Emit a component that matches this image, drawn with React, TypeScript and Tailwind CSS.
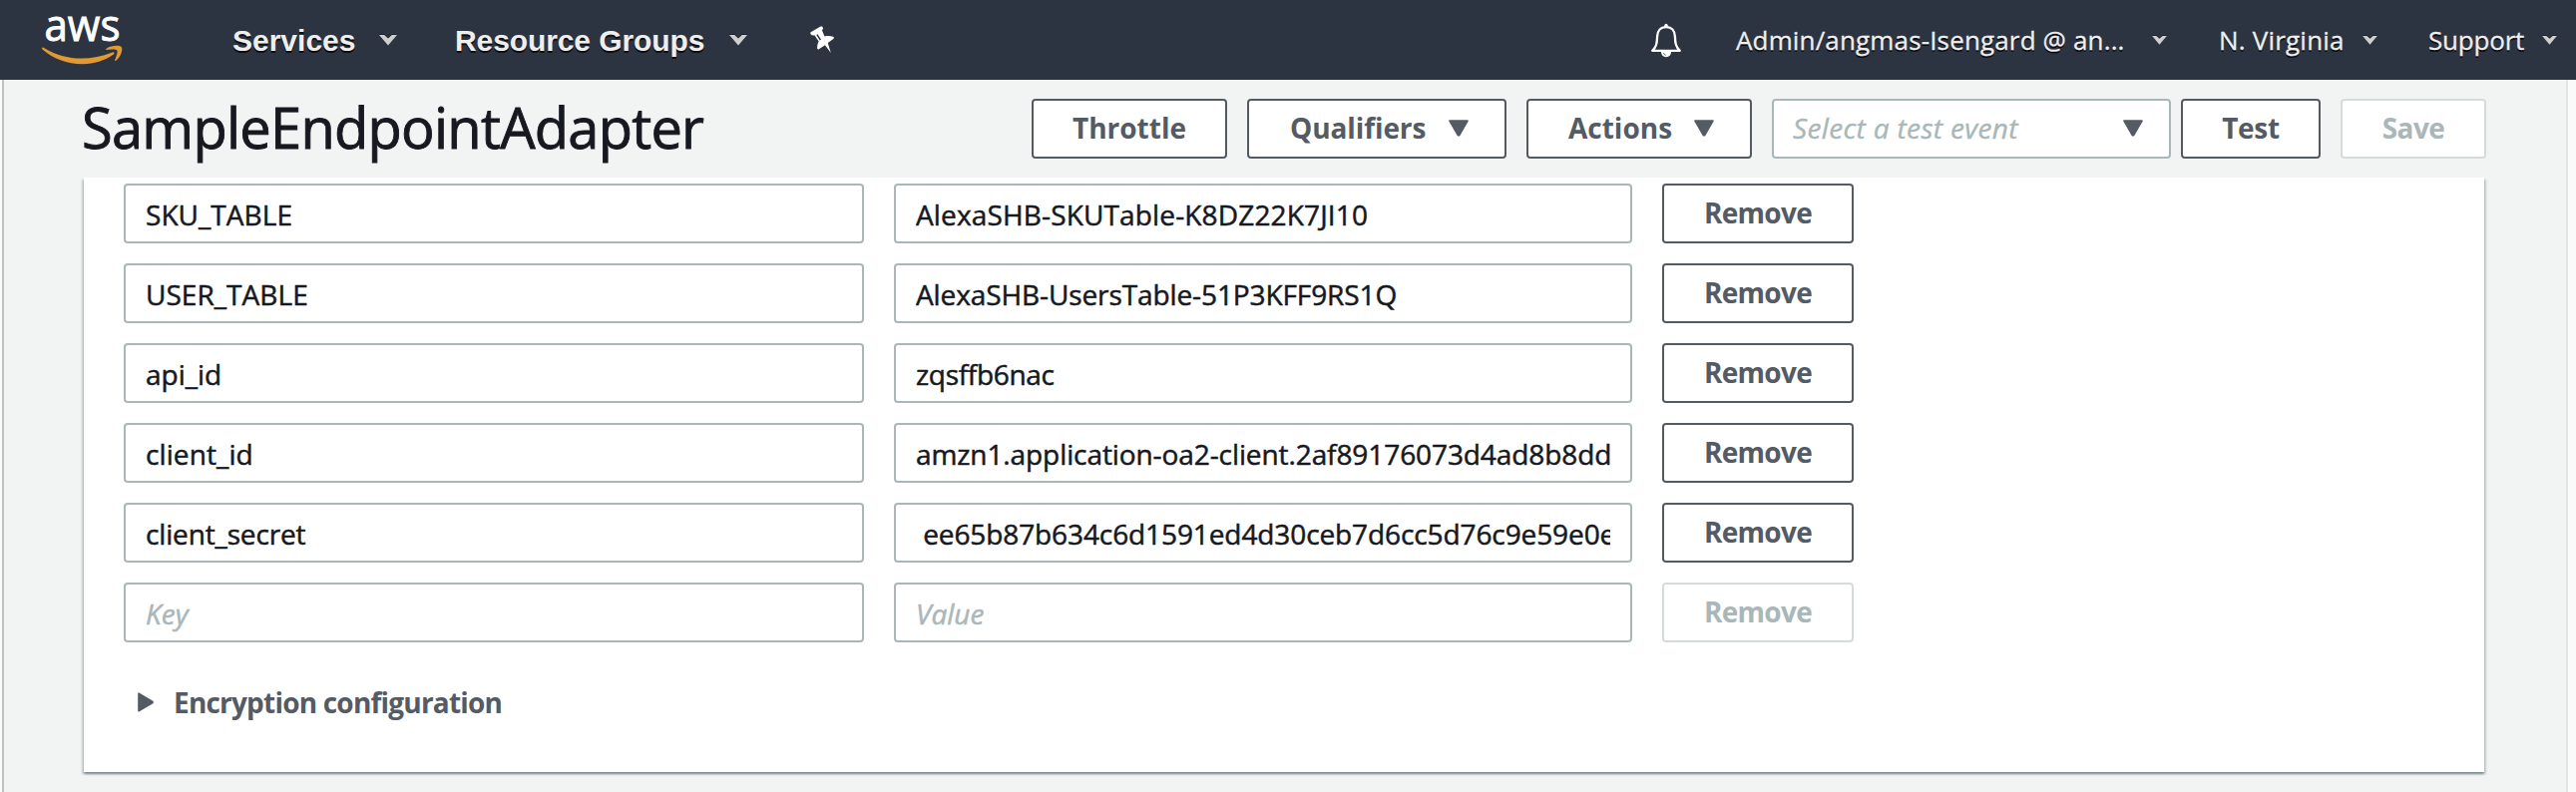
import React from "react";

type Field = { name: string; value: string; nameTracking: string; valueTracking: string };

const fields: Field[] = [
  { name: "SKU_TABLE", value: "AlexaSHB-SKUTable-K8DZ22K7JI10", nameTracking: "tracking-[0.05px]", valueTracking: "tracking-[0.15px]" },
  { name: "USER_TABLE", value: "AlexaSHB-UsersTable-51P3KFF9RS1Q", nameTracking: "tracking-[0.05px]", valueTracking: "tracking-[-0.1px]" },
  { name: "api_id", value: "zqsffb6nac", nameTracking: "", valueTracking: "tracking-[-0.3px]" },
  { name: "client_id", value: "amzn1.application-oa2-client.2af89176073d4ad8b8dd", nameTracking: "tracking-[0.1px]", valueTracking: "tracking-[-0.09px]" },
  { name: "client_secret", value: " ee65b87b634c6d1591ed4d30ceb7d6cc5d76c9e59e0e", nameTracking: "tracking-[-0.15px]", valueTracking: "tracking-[-0.1px]" },
  { name: "", value: "", nameTracking: "", valueTracking: "" },
];

const inputClass =
  "h-[60px] rounded-[4px] border-2 border-[#aab7b8] bg-white px-5 pt-[2px] text-[28px] text-[#16191f] outline-none [-webkit-text-stroke:0.5px] placeholder:italic placeholder:text-[#aab7b8]";

const buttonClass =
  "flex h-[60px] shrink-0 items-center rounded-[4px] border-2 border-[#545b64] bg-white pb-[2px] text-[28px] font-bold text-[#545b64]";

const disabledClass =
  "flex h-[60px] shrink-0 items-center rounded-[4px] border-2 border-[#d5dbdb] bg-white pb-[2px] text-[28px] font-bold text-[#aab7b8]";

function Triangle() {
  return (
    <svg width="20" height="17" viewBox="0 0 20 17" className="shrink-0">
      <path d="M1 1h18L10.7 15.6h-1.4z" fill="#545b64" stroke="#545b64" strokeWidth="1.6" strokeLinejoin="round" />
    </svg>
  );
}

function Caret({ small = false }: { small?: boolean }) {
  return (
    <svg
      width={small ? 15 : 18}
      height={small ? 9 : 11}
      viewBox="0 0 18 11"
      className="shrink-0 drop-shadow-[0_-1px_0_#1a1f29]"
    >
      <path d="M0 0h5.2L9 3.4 12.800 0H18L9 10.600z" fill="#cfcfcf" />
    </svg>
  );
}

function Logo() {
  return (
    <svg width="84" height="80" viewBox="42 0 84 80" className="shrink-0 overflow-visible [text-shadow:none]">
      <text
        x="44.500"
        y="40.500"
        fontSize="44"
        fill="#fff"
        stroke="#fff"
        strokeWidth=".9"
        textLength="76"
        lengthAdjust="spacingAndGlyphs"
        fontFamily="Open Sans, sans-serif"
      >
        aws
      </text>
      <path
        d="M42 48.200c.4-.8 1.200-.8 2-.3C56 55 68 58.500 82 58.500c10 0 20-2 30.500-6.100 1.600-.7 3 1 1.400 2.200C105 61 94 64.200 83 64.200 67 64.200 53 58.500 42.500 49.400c-.4-.4-.6-.8-.5-1.200z"
        fill="#e09a31"
      />
      <path
        d="M121.800 47.200c-2-2.300-10.600-1.500-15.200 1.500-.8.600-.7 1.500.3 1.400 3-.4 9.200-1 10.300.4 1.200 1.500-.9 6.700-2 9.600-.3.900.5 1.300 1.200.6 5-4 7-11.700 5.400-13.500z"
        fill="#e09a31"
      />
    </svg>
  );
}

function Pin() {
  return (
    <svg width="25" height="28" viewBox="0 0 25 28" className="shrink-0">
      <path
        d="M.6 6.200 10.500.6c1.200-.6 2.200.1 2.400 1.100.2 1-.2 1.900-1 2.500l2.600 6.200c2.800-.8 6-.6 8.600.4 1 .4 1 1.600.2 2.200l-5.500 3.900 3 10.100-5.900-7.700-6 3.900c-.9.500-1.800 0-1.800-1 0-2.300.4-4.700 1.600-6.700L4.300 9.300c-1.200.4-2.800.2-3.500-.7-.6-.8-.8-1.800-.2-2.400z"
        fill="#fff"
      />
      <path d="M6.900 8.600 10.400 14.200" stroke="#2c3341" strokeWidth="1.500" />
    </svg>
  );
}

function Bell() {
  return (
    <svg width="32" height="35" viewBox="0 0 32 35" className="shrink-0">
      <path
        d="M16 4.200c-5.800 0-8.700 4-8.900 9.400-.2 6.500-.8 10.400-4.900 14.200h27.600c-4.100-3.800-4.700-7.700-4.900-14.200C24.700 8.200 21.800 4.200 16 4.200z"
        fill="none"
        stroke="#fff"
        strokeWidth="2.300"
        strokeLinejoin="round"
      />
      <path d="M14.300 4V2.400a1.700 1.700 0 0 1 3.400 0V4z" fill="#fff" />
      <path d="M11 29h10c0 3-2 5.200-5 5.200S11 32 11 29z" fill="#fff" />
      <path d="M13.500 30c.2 1.200.9 2 2.200 2.300" stroke="#2c3341" strokeWidth=".8" fill="none" />
    </svg>
  );
}

export default function App() {
  return (
    <div className="flex h-[794px] w-[2582px] flex-col overflow-hidden bg-[#fafafa] font-['Open_Sans','Noto_Sans',sans-serif]">
      <header className="flex h-20 shrink-0 items-center whitespace-nowrap bg-[#2c3341] pl-[42px] text-[26px] text-[#eee] [text-shadow:0_2px_0_#0b0d11]">
        <Logo />
        <div className="ml-[107px] flex w-[223px] items-center justify-between pr-[58px] font-['Liberation_Sans',Arial,sans-serif] text-[30px] font-bold">
          <span className="w-[147px] shrink-0">Services</span>
          <Caret />
        </div>
        <div className="flex w-[356px] items-center font-['Liberation_Sans',Arial,sans-serif] text-[30px] font-bold">
          <span className="w-[275px] shrink-0 tracking-[-0.1px]">Resource Groups</span>
          <Caret />
        </div>
        <Pin />
        <div className="ml-[817px]">
          <Bell />
        </div>
        <div className="ml-[54px] flex w-[484px] items-center [-webkit-text-stroke:0.3px]">
          <span className="w-[417px] shrink-0 tracking-[0.15px]">Admin/angmas-Isengard @ an...</span>
          <Caret small />
        </div>
        <div className="flex w-[210px] items-center [-webkit-text-stroke:0.3px]">
          <span className="w-[144px] shrink-0 tracking-[0.2px]">N. Virginia</span>
          <Caret small />
        </div>
        <div className="flex items-center [-webkit-text-stroke:0.3px]">
          <span className="w-[114px] shrink-0 tracking-[-0.2px]">Support</span>
          <Caret small />
        </div>
      </header>

      <div className="ml-[2px] flex w-[2572px] grow flex-col border-l-2 border-r-2 border-l-[#bcc2c3] border-r-[#e3e5e5] bg-[#f2f3f3]">
        <div className="flex h-[98px] shrink-0 items-center pl-[78px]">
          <h1 className="w-[952px] pb-[4px] text-[56px] tracking-[-0.75px] text-[#16191f] [-webkit-text-stroke:0.9px]">
            SampleEndpointAdapter
          </h1>
          <button className={buttonClass + " w-[196px] justify-center"}>Throttle</button>
          <button className={buttonClass + " ml-5 w-[260px] justify-between pl-[41px] pr-9 tracking-[-0.1px]"}>
            Qualifiers
            <Triangle />
          </button>
          <button className={buttonClass + " ml-5 w-[226px] justify-between pl-10 pr-9"}>
            Actions
            <Triangle />
          </button>
          <div className="ml-5 flex h-[60px] w-[400px] items-center justify-between rounded-[4px] border-2 border-[#aab7b8] bg-white pb-[2px] pl-[19px] pr-[26px] text-[28px] italic tracking-[0.35px] text-[#aab7b8] [-webkit-text-stroke:0.4px]">
            <span>Select a test event</span>
            <Triangle />
          </div>
          <button className={buttonClass + " ml-[10px] w-[140px] justify-center tracking-[-0.3px]"}>Test</button>
          <button className={disabledClass + " ml-5 w-[146px] justify-center tracking-[-0.6px]"}>Save</button>
        </div>

        <div className="overflow-hidden pb-5 pl-[80px]">
          <main className="flex h-[596px] w-[2406px] flex-col gap-5 bg-white pl-10 pt-1.5 shadow-[0_2px_2px_0_rgba(0,28,36,0.3),2px_2px_2px_0_rgba(0,28,36,0.15),-2px_2px_2px_0_rgba(0,28,36,0.15)]">
            {fields.map((field) => (
              <div key={field.name} className="flex shrink-0 gap-[30px]">
                <input className={inputClass + " w-[742px] " + field.nameTracking} defaultValue={field.name} placeholder="Key" />
                <input className={inputClass + " w-[740px] " + field.valueTracking} defaultValue={field.value} placeholder="Value" />
                <button className={(field.name ? buttonClass : disabledClass) + " w-[192px] justify-center tracking-[-0.7px]"}>
                  Remove
                </button>
              </div>
            ))}
            <div className="mt-[19px] flex items-center gap-[20px] pl-[14px] text-[28px] font-bold tracking-[-0.8px] text-[#545b64]">
              <svg width="16" height="20" viewBox="0 0 16 20">
                <path d="M1 1.200v17.600L15 10.600V9.400z" fill="#545b64" stroke="#545b64" strokeWidth="1.600" strokeLinejoin="round" />
              </svg>
              <span>Encryption configuration</span>
            </div>
          </main>
        </div>
      </div>
    </div>
  );
}
